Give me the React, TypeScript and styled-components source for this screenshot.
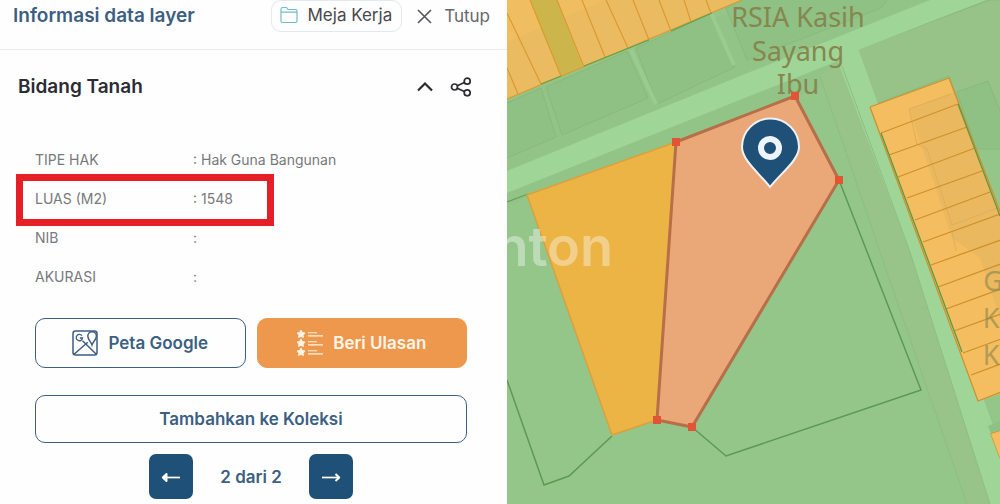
import React from 'react';
import styled, { createGlobalStyle, css } from 'styled-components';

const navy = '#1f5078';
const slate = '#3d5f82';
const orange = '#ee984e';

const GlobalStyle = createGlobalStyle`
  * { box-sizing: border-box; }
  body { margin: 0; background: #fff; font-family: Inter, "Liberation Sans", sans-serif; }
  button { font: inherit; cursor: pointer; }
  h1, h2, p { margin: 0; }
`;

const Page = styled.main`
  display: grid;
  grid-template-columns: minmax(0, 507fr) minmax(0, 493fr);
  min-height: 100vh;
`;

const Panel = styled.section`
  display: flex;
  flex-direction: column;
  background: #fefefe;
`;

const Header = styled.header`
  display: flex;
  align-items: flex-start;
  justify-content: space-between;
  height: 50px;
  padding: 0 17px 0 13px;
  border-bottom: 1px solid #ececee;
`;

const Title = styled.h1`
  font-size: 19px;
  line-height: 32px;
  font-weight: 600;
  color: ${slate};
`;

const HeaderActions = styled.div`
  display: flex;
  gap: 15px;
`;

const HeaderButton = styled.button<{ $framed?: boolean }>`
  display: flex;
  align-items: center;
  gap: 12px;
  height: 32px;
  padding: 0;
  border: 0;
  background: none;
  color: #66686c;
  font-size: 17px;
  line-height: 24px;
  ${({ $framed }) => $framed && css`
    gap: 10px;
    padding: 0 9px 2px 8px;
    border: 1px solid #e3e9ec;
    border-radius: 10px;
    color: #48494d;
  `}
`;

const SectionHeader = styled.div`
  display: flex;
  align-items: center;
  justify-content: space-between;
  padding: 21px 35px 0 18px;
`;

const SectionTitle = styled.h2`
  font-size: 19px;
  line-height: 32px;
  font-weight: 600;
  color: #2b2c34;
`;

const IconGroup = styled.div`
  display: flex;
  gap: 14px;
`;

const IconButton = styled.button`
  display: flex;
  padding: 0;
  border: 0;
  background: none;
  color: #2b2c30;
`;

const Details = styled.table`
  margin: 37px 34px 0 35px;
  border-collapse: collapse;
  color: #77797d;
  font-size: 14px;
  line-height: 19px;
`;

const DetailRow = styled.tr`
  position: relative;
  height: 39px;
`;

const Label = styled.th`
  width: 158px;
  padding: 0;
  text-align: left;
  font-weight: 400;
`;

const Value = styled.td`
  padding: 0;
`;

const Highlight = styled.span`
  position: absolute;
  left: -19px;
  top: -5px;
  width: 258px;
  height: 52px;
  border: 7px solid #e61e25;
  pointer-events: none;
`;

const Actions = styled.div`
  display: grid;
  grid-template-columns: 1fr 1fr;
  gap: 27px 11px;
  padding: 22px 40px 0 35px;
`;

const ActionButton = styled.button<{ $filled?: boolean; $wide?: boolean }>`
  display: flex;
  align-items: center;
  justify-content: center;
  gap: 10px;
  height: ${({ $wide }) => ($wide ? 48 : 50)}px;
  padding: 0;
  border: 1px solid ${({ $filled }) => ($filled ? orange : slate)};
  border-radius: 10px;
  background: ${({ $filled }) => ($filled ? orange : '#fefefe')};
  color: ${({ $filled }) => ($filled ? '#fff5e9' : slate)};
  font-size: 17px;
  font-weight: 600;
  ${({ $wide }) => $wide && css`grid-column: 1 / -1;`}
`;

const Pager = styled.nav`
  display: flex;
  align-items: center;
  justify-content: center;
  gap: 27px;
  padding: 11px 40px 0 35px;
  color: ${slate};
  font-size: 17px;
  line-height: 24px;
  font-weight: 600;
`;

const PagerButton = styled.button`
  display: flex;
  align-items: center;
  justify-content: center;
  width: 44px;
  height: 45px;
  padding: 0;
  border: 0;
  border-radius: 7px;
  background: ${navy};
  color: #fff;
`;

const MapArea = styled.section`
  position: relative;
  overflow: hidden;
  background: #94c689;
`;

const MapDrawing = styled.svg`
  position: absolute;
  inset: 0;
  width: 100%;
  height: 100%;
`;

const PlaceText = styled.text`
  font-family: "Noto Sans", sans-serif;
  font-size: 27px;
  fill: #86864f;
  text-anchor: middle;
`;

const Watermark = styled.text`
  font-family: Inter, sans-serif;
  font-size: 54px;
  font-weight: 600;
  fill: #fff;
  fill-opacity: 0.38;
  text-anchor: end;
`;

function FolderIcon() {
  return (
    <svg width="18" height="18" viewBox="0 0 18 18" fill="none" stroke="#72bdc5" strokeWidth="1.2" strokeLinejoin="round">
      <path d="M1 15V3q0-1.500 1.500-1.500h4L8 3.500h7.500q1.500 0 1.500 1.500v10q0 1.500-1.500 1.500h-13Q1 16.500 1 15zM1 6.200h16" />
    </svg>
  );
}

function CloseIcon() {
  return (
    <svg width="15" height="15" viewBox="0 0 15 15" stroke="#55565a" strokeWidth="1.600">
      <path d="M1 1l13 13M14 1L1 14" />
    </svg>
  );
}

function ChevronIcon() {
  return (
    <svg width="22" height="22" viewBox="0 0 22 22" fill="none" stroke="currentColor" strokeWidth="2.200">
      <path d="M4 14.500l7-7 7 7" />
    </svg>
  );
}

function ShareIcon() {
  return (
    <svg width="22" height="22" viewBox="0 0 22 22" fill="none" stroke="currentColor" strokeWidth="1.700">
      <circle cx="4.500" cy="11" r="3" />
      <circle cx="17.200" cy="5.200" r="3" />
      <circle cx="17.200" cy="16.800" r="3" />
      <path d="M7.300 9.800l7-3.300M7.300 12.200l7 3.300" />
    </svg>
  );
}

function GoogleMapIcon() {
  return (
    <svg width="26" height="26" viewBox="0 0 26 26" fill="none" stroke="currentColor" strokeWidth="1.500">
      <rect x="1" y="1" width="24" height="24" rx="2.500" />
      <path d="M2 24.200L15.800 12.200M10.500 10.800L24.300 24.200" />
      <path d="M20 14.800c-.8-2.800-4.200-5-4.200-8.800a4.300 4.300 0 0 1 8.600 0c0 3.800-3.600 6-4.400 8.800z" fill="#fefefe" />
      <path d="M10 5.600A3.200 3.200 0 1 0 10.600 8H7.800" strokeWidth="1.300" />
    </svg>
  );
}

function ReviewIcon() {
  return (
    <svg width="26" height="26" viewBox="0 0 26 26" fill="currentColor">
      {[4, 13, 22].map((y) => (
        <g key={y} transform={`translate(4 ${y})`}>
          <path
            d="M0-3.600L1.200-1.300 3.700-.9 1.900.9 2.300 3.300 0 2.200-2.300 3.300-1.900.9-3.700-.9-1.200-1.300z"
            stroke="currentColor"
            strokeWidth="1.200"
            strokeLinejoin="round"
          />
          <path d="M7-1.800h9v1H7zM7 1.300h15v1.200H7z" />
        </g>
      ))}
    </svg>
  );
}

function ArrowIcon({ back }: { back?: boolean }) {
  return (
    <svg width="20" height="12" viewBox="0 0 20 12" fill="none" stroke="currentColor" strokeWidth="1.700" strokeLinejoin="round">
      <path d={back ? 'M19 6.500H2' : 'M1 6.500h17'} />
      <path d={back ? 'M5.500 3L1.800 6.500l3.700 3.500V3z' : 'M14.500 3l3.700 3.500-3.700 3.500'} strokeWidth="2" />
    </svg>
  );
}

const details = [
  { label: 'TIPE HAK', value: 'Hak Guna Bangunan' },
  { label: 'LUAS (M2)', value: '1548', highlighted: true },
  { label: 'NIB', value: '' },
  { label: 'AKURASI', value: '' },
];

const corners = [[676, 142], [795, 96], [839, 180], [692, 427], [657, 420]];

function ParcelMap() {
  return (
    <MapDrawing viewBox="507 0 493 504" preserveAspectRatio="xMidYMid slice" role="img" aria-label="Peta bidang tanah">
      <path d="M507 100L760 0h240v60L832 84 507 206z" fill="#92c487" />
      <path d="M820 76l22-12 68 188 80 252h-23l-87-252z" fill="#98c489" />
      <g fill="#8fc084" stroke="#88ba7e" strokeWidth="1">
        <path d="M500 106L541 88l15 49-56 24z" />
        <path d="M546 87l81-36 21 47-86 37z" />
        <path d="M636 48l76-35 23 54-78 37z" />
        <path d="M726 8l24-12h140l-9 12-134 52z" />
        <path d="M858 49L990 0h20v160l-52-60-9-24-73 28z" fill="#98c388" />
        <path d="M957 92l31-11 22 54v14l-34 0z" />
      </g>
      <path d="M507 171L750 72 930 0h56L858 50 840 60 507 193z" fill="#9fd597" />
      <path d="M838 62l20-14 142 397v59h-10l-80-252z" fill="#9fd597" />
      <path d="M711 13l23 52M631 50l25 54" stroke="#99cc8d" strokeWidth="4" />
      <path d="M820 76l60 176 87 252M842 66l68 186 80 252" stroke="#8dbf83" strokeWidth="1" fill="none" />
      <path d="M988 426l12-5v23l-8-8z" fill="#8fc084" />

      <path d="M507 99L742 0H507z" fill="#eabb60" />
      <path d="M507 42L605 0H507z" fill="#f0be60" />
      <path d="M530 0h27l26 67-22 9z" fill="#ccb64b" />
      <path
        d="M507 13l34 71M507 68l11 26M530 0l31 76M557 0l27 67M582 0l23 57M606 0l22 48M633 0l16 40M659 0l12 31M684 0l7 22M706 0l5 13M507 99L742 0"
        stroke="#db9a32"
        strokeWidth="1.200"
        fill="none"
      />
      <path d="M541 84l20-8M584 66l65-26M671 31l41-18M507 202l21-8" stroke="#62a24e" strokeWidth="1.300" />

      <path d="M870 107l79-29 60 157v156l-31 10z" fill="#f4bd60" />
      <path d="M909 109l45-17 55 143v90l-9-7-20-60-28-20-25-76z" fill="#eab85f" />
      <path d="M909 109l42-15M909 109l8 35 10 5 25 76 48-18M952 231l4 20" stroke="#e1ae59" strokeWidth="1" fill="none" />
      <path
        d="M870 107l79-29 60 157M870 107l108 294 31-12M881 133l77-29M889 155l78-28M898 177l77-29M907 198l75-27M915 220l75-28M923 242l77-28M931 265l78-28M938 287l71-26M946 309l63-23M954 331l55-20M963 353l46-17M971 375l38-14M1000 431l-9 3 9 24"
        stroke="#cf912d"
        strokeWidth="1.300"
        fill="none"
      />
      <path d="M991 434l9-3v27z" fill="#f4bd60" />
      <path d="M881 133l81 219M958 104l42 112" stroke="#579a49" strokeWidth="1.300" />

      <path d="M839 180l82 210-195 66-34-29M507 380l37 105 25-9 43-40" fill="none" stroke="#5b9a54" strokeWidth="1.500" />
      <path d="M527 195l149-53-19 278-45 15z" fill="#ebb445" stroke="#dca03c" strokeWidth="1.500" />

      <PlaceText x="798" y="27">RSIA Kasih</PlaceText>
      <PlaceText x="798" y="61">Sayang</PlaceText>
      <PlaceText x="798" y="94">Ibu</PlaceText>
      <g opacity="0.6">
        <PlaceText x="993" y="291">G</PlaceText>
        <PlaceText x="991" y="328">K</PlaceText>
        <PlaceText x="991" y="365">K</PlaceText>
      </g>

      <path d="M676 142l119-46 44 84-147 247-35-7z" fill="#eaa777" stroke="#b66f49" strokeWidth="3" />
      {corners.map(([x, y]) => (
        <rect key={x} x={x - 4} y={y - 4} width="8" height="8" fill="#e25434" />
      ))}
      <path d="M770 187c-11-14-28-27-28-40a28 28 0 0 1 57 0c0 13-18 26-29 40z" fill={navy} stroke="#edf3f5" strokeWidth="2" />
      <circle cx="770" cy="148" r="9" fill={navy} stroke="#edf4fc" strokeWidth="6" />
      <Watermark x="613" y="266">nton</Watermark>
    </MapDrawing>
  );
}

export default function App() {
  return (
    <>
      <GlobalStyle />
      <Page>
        <Panel>
          <Header>
            <Title>Informasi data layer</Title>
            <HeaderActions>
              <HeaderButton type="button" $framed><FolderIcon />Meja Kerja</HeaderButton>
              <HeaderButton type="button"><CloseIcon />Tutup</HeaderButton>
            </HeaderActions>
          </Header>
          <SectionHeader>
            <SectionTitle>Bidang Tanah</SectionTitle>
            <IconGroup>
              <IconButton type="button" aria-label="Ciutkan"><ChevronIcon /></IconButton>
              <IconButton type="button" aria-label="Bagikan"><ShareIcon /></IconButton>
            </IconGroup>
          </SectionHeader>
          <Details>
            <tbody>
              {details.map(({ label, value, highlighted }) => (
                <DetailRow key={label}>
                  <Label scope="row">{label}{highlighted && <Highlight />}</Label>
                  <Value>: {value}</Value>
                </DetailRow>
              ))}
            </tbody>
          </Details>
          <Actions>
            <ActionButton type="button"><GoogleMapIcon />Peta Google</ActionButton>
            <ActionButton type="button" $filled><ReviewIcon />Beri Ulasan</ActionButton>
            <ActionButton type="button" $wide>Tambahkan ke Koleksi</ActionButton>
          </Actions>
          <Pager aria-label="Navigasi bidang">
            <PagerButton type="button" aria-label="Sebelumnya"><ArrowIcon back /></PagerButton>
            <span>2 dari 2</span>
            <PagerButton type="button" aria-label="Berikutnya"><ArrowIcon /></PagerButton>
          </Pager>
        </Panel>
        <MapArea><ParcelMap /></MapArea>
      </Page>
    </>
  );
}
